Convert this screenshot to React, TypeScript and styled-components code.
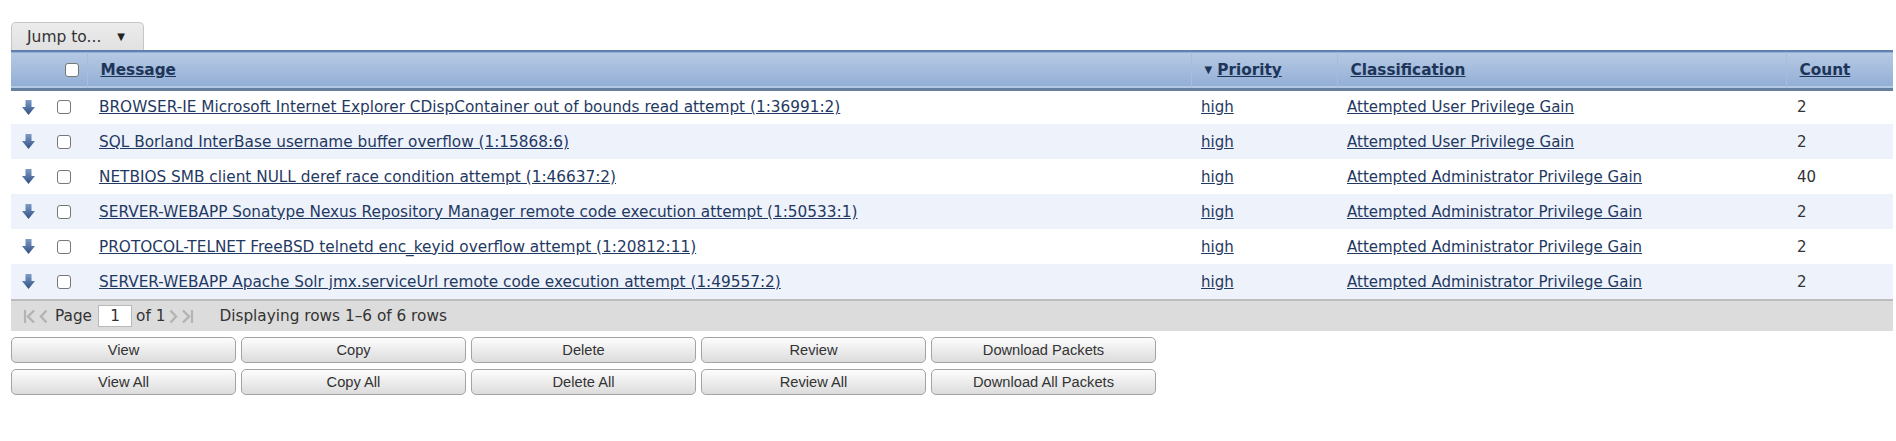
import styled, { createGlobalStyle } from 'styled-components'

const GlobalStyle = createGlobalStyle`
  html, body {
    margin: 0;
    padding: 0;
    background: #fff;
    font-family: "DejaVu Sans", Verdana, sans-serif;
    font-size: 15.3px;
    color: #333;
  }
`

const Page = styled.div`
  padding: 22px 3px 0 11px;
  width: 1882px;
`

const JumpTab = styled.div`
  display: inline-flex;
  align-items: center;
  gap: 16px;
  box-sizing: border-box;
  width: 133px;
  height: 28px;
  padding-left: 15px;
  background: linear-gradient(#ececec, #e1e1e1);
  border: 1px solid #c6c6c6;
  border-bottom: none;
  border-radius: 5px 5px 0 0;
  color: #333;
  font-size: 15.5px;
`

const Caret = styled.span`
  font-size: 10px;
  color: #222;
`

const Table = styled.table`
  width: 1882px;
  border-collapse: collapse;
  table-layout: fixed;
`

const HeadRow = styled.tr`
  height: 38px;
  background: linear-gradient(#b6c9e4, #93afd6);
  border-top: 2px solid #5f80b0;
  border-bottom: 3px solid #67809f;
`

const Th = styled.th<{ $divider?: boolean }>`
  padding: 0 0 0 13px;
  text-align: left;
  font-weight: bold;
  font-size: 15.3px;
  border-left: ${p => (p.$divider ? '1px solid #a7bcdb' : 'none')};
`

const HeadLink = styled.a`
  color: #1d3558;
  text-decoration: underline;
  cursor: pointer;
`

const SortMark = styled.span`
  font-size: 10px;
  color: #1d3558;
  margin-right: 5px;
  vertical-align: 2px;
`

const Row = styled.tr<{ $alt: boolean }>`
  height: 35px;
  background: ${p => (p.$alt ? '#eef2fa' : '#fff')};
`

const Td = styled.td<{ $pad?: number; $size?: number }>`
  padding: 0 0 0 ${p => p.$pad ?? 10}px;
  font-size: ${p => p.$size ?? 15.3}px;
  white-space: nowrap;
  overflow: hidden;
`

const IconCell = styled.td`
  padding: 0 0 0 11px;
  line-height: 0;
`

const CheckCell = styled.td`
  padding: 0 0 0 12px;
  line-height: 0;
`

const Check = styled.input`
  appearance: none;
  box-sizing: border-box;
  width: 14px;
  height: 14px;
  margin: 0;
  background: #fff;
  border: 1px solid #777;
  border-radius: 3px;
`

const CellLink = styled.a`
  color: #1f3962;
  text-decoration: underline;
  cursor: pointer;
`

const Pager = styled.div`
  display: flex;
  align-items: center;
  box-sizing: border-box;
  width: 1882px;
  height: 32px;
  padding-left: 12px;
  background: #dcdcdc;
  border-top: 2px solid #bdbdbd;
  color: #333;
`

const PagerIcon = styled.svg`
  display: block;
  margin-right: 3px;
`

const PagerText = styled.span<{ $gap?: number; $lead?: number }>`
  margin: 0 ${p => p.$gap ?? 6}px 0 ${p => p.$lead ?? 4}px;
`

const PageInput = styled.div`
  box-sizing: border-box;
  width: 34px;
  height: 22px;
  background: #fff;
  border: 1px solid #b9b9b9;
  display: flex;
  align-items: center;
  justify-content: center;
`

const Buttons = styled.div`
  display: grid;
  grid-template-columns: repeat(5, 225px);
  column-gap: 5px;
  row-gap: 6px;
  margin-top: 6px;
`

const Button = styled.button`
  height: 26px;
  padding: 0;
  border: 1px solid #a3a3a3;
  border-radius: 5px;
  background: linear-gradient(#fdfdfd, #dcdcdc);
  font-family: "Liberation Sans", Arial, sans-serif;
  font-size: 11pt;
  color: #333;
  cursor: pointer;
`

const DownArrow = () => (
  <svg width="13" height="15" viewBox="0 0 13 15">
    <defs>
      <linearGradient id="ag" x1="0" y1="0" x2="0" y2="1">
        <stop offset="0" stopColor="#7f9cc8" />
        <stop offset="1" stopColor="#2f4f82" />
      </linearGradient>
    </defs>
    <path d="M3.5 0 H9.5 V7 H13 L6.5 15 L0 7 H3.5 Z" fill="url(#ag)" />
  </svg>
)

const First = () => (
  <PagerIcon width="13" height="15" viewBox="0 0 13 15">
    <path d="M2 1 V14" stroke="#b3b3b3" strokeWidth="2.2" />
    <path d="M11 1.5 L5 7.5 L11 13.5" stroke="#b3b3b3" strokeWidth="2.4" fill="none" />
  </PagerIcon>
)
const Prev = () => (
  <PagerIcon width="9" height="15" viewBox="0 0 9 15">
    <path d="M7.5 1.5 L2 7.5 L7.5 13.5" stroke="#b3b3b3" strokeWidth="2.4" fill="none" />
  </PagerIcon>
)
const Next = () => (
  <PagerIcon width="9" height="15" viewBox="0 0 9 15">
    <path d="M1.5 1.5 L7 7.5 L1.5 13.5" stroke="#b3b3b3" strokeWidth="2.4" fill="none" />
  </PagerIcon>
)
const Last = () => (
  <PagerIcon width="13" height="15" viewBox="0 0 13 15">
    <path d="M2 1.5 L8 7.5 L2 13.5" stroke="#b3b3b3" strokeWidth="2.4" fill="none" />
    <path d="M11 1 V14" stroke="#b3b3b3" strokeWidth="2.2" />
  </PagerIcon>
)

const rows = [
  { msg: 'BROWSER-IE Microsoft Internet Explorer CDispContainer out of bounds read attempt (1:36991:2)', cls: 'Attempted User Privilege Gain', count: 2 },
  { msg: 'SQL Borland InterBase username buffer overflow (1:15868:6)', cls: 'Attempted User Privilege Gain', count: 2 },
  { msg: 'NETBIOS SMB client NULL deref race condition attempt (1:46637:2)', cls: 'Attempted Administrator Privilege Gain', count: 40 },
  { msg: 'SERVER-WEBAPP Sonatype Nexus Repository Manager remote code execution attempt (1:50533:1)', cls: 'Attempted Administrator Privilege Gain', count: 2 },
  { msg: 'PROTOCOL-TELNET FreeBSD telnetd enc_keyid overflow attempt (1:20812:11)', cls: 'Attempted Administrator Privilege Gain', count: 2 },
  { msg: 'SERVER-WEBAPP Apache Solr jmx.serviceUrl remote code execution attempt (1:49557:2)', cls: 'Attempted Administrator Privilege Gain', count: 2 },
]

const actions = ['View', 'Copy', 'Delete', 'Review', 'Download Packets', 'View All', 'Copy All', 'Delete All', 'Review All', 'Download All Packets']

export default function App() {
  return (
    <Page>
      <GlobalStyle />
      <JumpTab>
        Jump to... <Caret>▼</Caret>
      </JumpTab>
      <Table>
        <colgroup>
          <col style={{ width: 34 }} />
          <col style={{ width: 42 }} />
          <col style={{ width: 1104 }} />
          <col style={{ width: 146 }} />
          <col style={{ width: 449 }} />
          <col style={{ width: 107 }} />
        </colgroup>
        <thead>
          <HeadRow>
            <th />
            <CheckCell as="th">
              <Check type="checkbox" />
            </CheckCell>
            <Th $divider><HeadLink>Message</HeadLink></Th>
            <Th $divider>
              <SortMark>▼</SortMark>
              <HeadLink>Priority</HeadLink>
            </Th>
            <Th $divider><HeadLink>Classification</HeadLink></Th>
            <Th $divider><HeadLink>Count</HeadLink></Th>
          </HeadRow>
        </thead>
        <tbody>
          {rows.map((r, i) => (
            <Row key={i} $alt={i % 2 === 1}>
              <IconCell><DownArrow /></IconCell>
              <CheckCell><Check type="checkbox" /></CheckCell>
              <Td $pad={12}><CellLink>{r.msg}</CellLink></Td>
              <Td $size={15}><CellLink>high</CellLink></Td>
              <Td $size={15}><CellLink>{r.cls}</CellLink></Td>
              <Td $pad={11} $size={15}>{r.count}</Td>
            </Row>
          ))}
        </tbody>
      </Table>
      <Pager>
        <First />
        <Prev />
        <PagerText>Page</PagerText>
        <PageInput>1</PageInput>
        <PagerText $gap={4}>of 1</PagerText>
        <Next />
        <Last />
        <PagerText $gap={0} $lead={22}>Displaying rows 1–6 of 6 rows</PagerText>
      </Pager>
      <Buttons>
        {actions.map(a => (
          <Button key={a}>{a}</Button>
        ))}
      </Buttons>
    </Page>
  )
}
